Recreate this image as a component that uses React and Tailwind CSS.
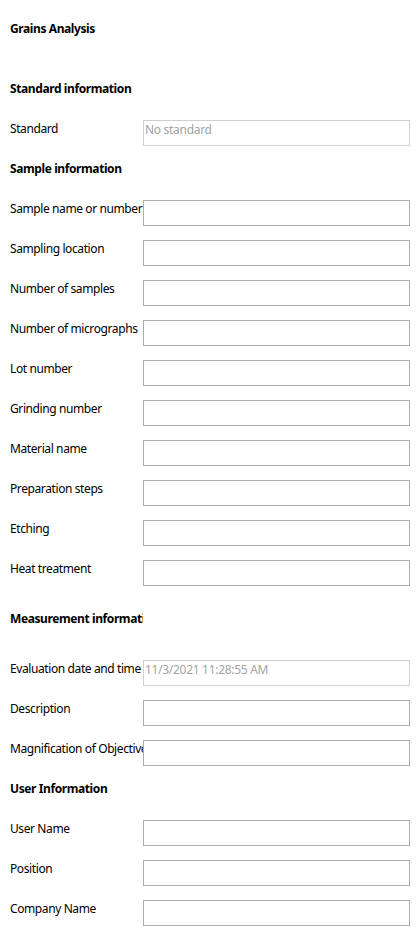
import React from "react";

const font = { fontFamily: '"Segoe UI", "Noto Sans", "Open Sans", sans-serif' };

function Heading({ children }) {
  return (
    <div className="h-[40px] flex items-start">
      <div className="w-[133px] overflow-hidden whitespace-nowrap text-[12px] leading-[16px] font-bold tracking-[-0.4px] text-black pt-[1px]">
        {children}
      </div>
    </div>
  );
}

function Row({ label, value, disabled }) {
  return (
    <div className="h-[40px] flex items-start">
      <div className="w-[133px] shrink-0 overflow-hidden whitespace-nowrap text-[12px] leading-[16px] tracking-[-0.4px] text-black pt-[1px]">
        {label}
      </div>
      <div
        className={`w-[267px] h-[26px] border ${
          disabled ? "border-[#cfcfcf]" : "border-[#adadad]"
        } bg-white text-[12px] leading-[16px] tracking-[-0.3px] text-[#a3a3a3] px-[1px] pt-[1px] whitespace-nowrap overflow-hidden`}
      >
        {value || ""}
      </div>
    </div>
  );
}

export default function App() {
  return (
    <div className="w-[420px] h-[950px] bg-white pl-[10px] pt-[20px]" style={font}>
      <Heading>Grains Analysis</Heading>
      <div className="h-[20px]" />
      <Heading>Standard information</Heading>
      <Row label="Standard" value="No standard" disabled />
      <Heading>Sample information</Heading>
      <Row label="Sample name or number" />
      <Row label="Sampling location" />
      <Row label="Number of samples" />
      <Row label="Number of micrographs" />
      <Row label="Lot number" />
      <Row label="Grinding number" />
      <Row label="Material name" />
      <Row label="Preparation steps" />
      <Row label="Etching" />
      <Row label="Heat treatment" />
      <div className="h-[10px]" />
      <Heading>Measurement information</Heading>
      <div className="h-[10px]" />
      <Row label="Evaluation date and time" value="11/3/2021 11:28:55 AM" disabled />
      <Row label="Description" />
      <Row label="Magnification of Objective" />
      <Heading>User Information</Heading>
      <Row label="User Name" />
      <Row label="Position" />
      <Row label="Company Name" />
    </div>
  );
}
